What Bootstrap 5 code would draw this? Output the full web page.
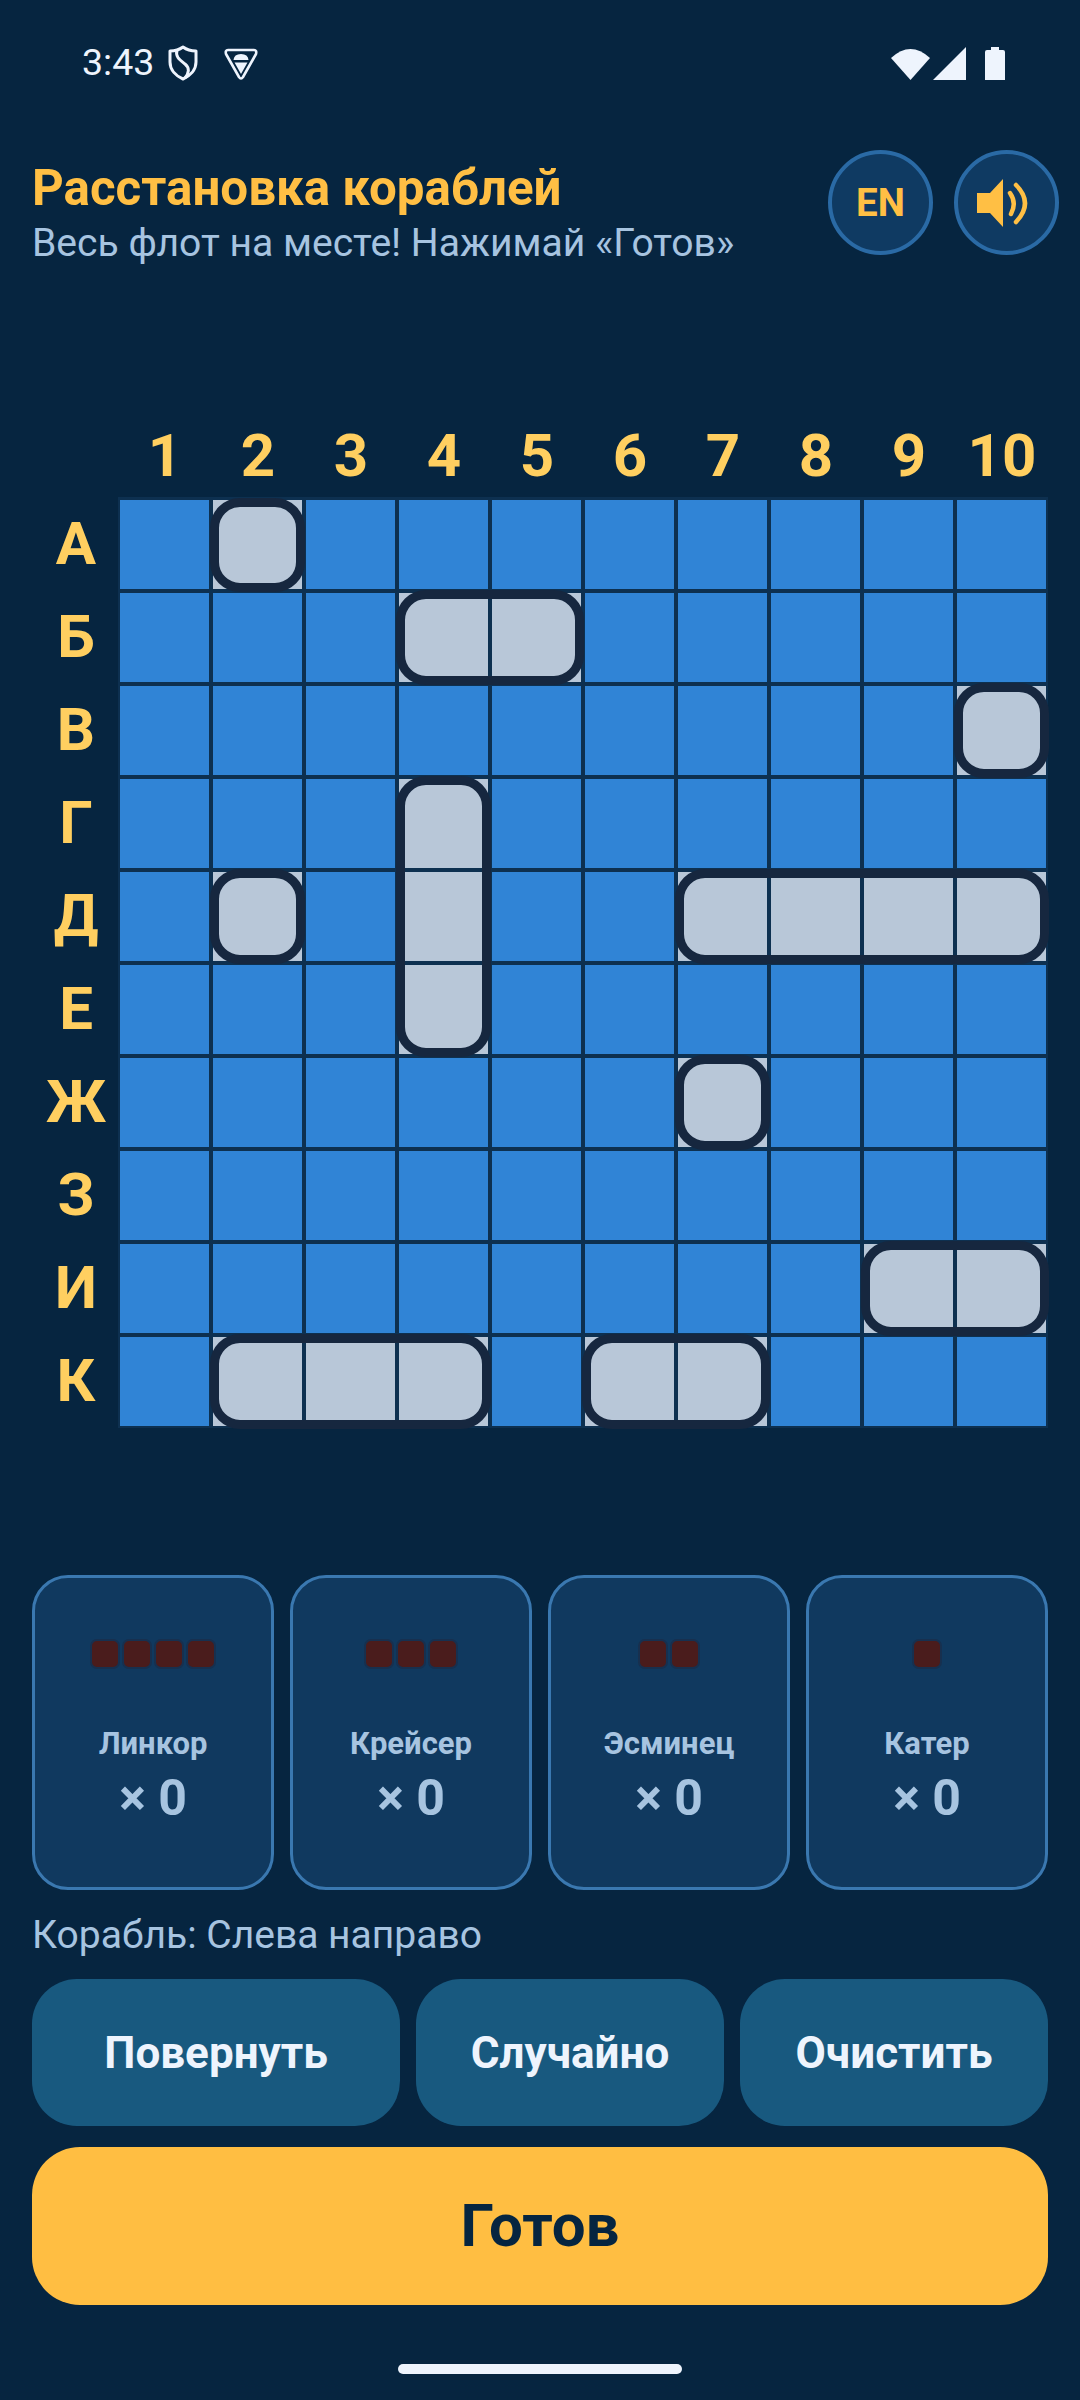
<!DOCTYPE html>
<html lang="ru">
<head>
    <meta charset="UTF-8">
    <meta name="viewport" content="width=device-width, initial-scale=1.0">
    <title>Расстановка кораблей</title>
    <link href="https://cdn.jsdelivr.net/npm/bootstrap@5.3.3/dist/css/bootstrap.min.css" rel="stylesheet">
    <style>
        html, body {
            background: #062540;
            font-family: Roboto, "Liberation Sans", sans-serif;
            color: #a7c4e0;
        }
        body { width: 1080px; height: 2400px; overflow: hidden; }

        /* status bar */
        .status-bar { height: 126px; padding: 0 75px 0 82px; color: #eef4fd; }
        .status-time { font-size: 37.5px; line-height: 1; width: 86px; }

        /* header */
        .top-head { height: 104px; margin-top: 24px; padding: 0 21px 0 32px; }
        .page-title { font-size: 49.3px; line-height: 56px; font-weight: 700; color: #ffbf44; margin: 10px 0 0; }
        .page-sub { font-size: 39.1px; line-height: 42px; margin-top: 6px; }
        .round-btn {
            width: 105px; height: 105px; padding: 0;
            border: 4px solid #2a6aa5; border-radius: 50%;
            background: #0f3a62; color: #ffbf44;
            font-size: 38.500px; font-weight: 700;
        }
        .round-btn:hover { background: #0f3a62; color: #ffbf44; border-color: #2a6aa5; }

        /* board */
        .board-wrap { margin-top: 166px; padding-left: 32px; }
        .col-heads { margin-left: 86.5px; height: 77px; }
        .col-head { width: 93px; padding-top: 3px; text-align: center; font-size: 60px; line-height: 66px; font-weight: 700; color: #ffcf60; }
        .row-heads { width: 86px; padding-left: 2px; }
        .row-head { height: 93px; font-size: 60px; font-weight: 700; color: #ffcf60; }
        .board {
            display: grid;
            grid-template-columns: repeat(10, 89.4px);
            grid-auto-rows: 89.4px;
            gap: 3.6px;
            padding: 3px 2px 2px;
            background: #0d3050;
        }
        .sea { background: #3084d6; }
        .sea.hull { background: #b8c7d8; }
        .ship-frame {
            margin: -2.500px;
            border: 9.500px solid #16273f;
            border-radius: 30px;
            pointer-events: none;
        }

        /* fleet cards */
        .fleet { margin-top: 147px; padding: 0 32px; }
        .fleet-card {
            height: 315px;
            background: #10395f;
            border: 3px solid #3a78b0;
            border-radius: 36px;
            align-items: center;
        }
        .hull-row { margin-top: 61px; height: 30px; gap: 2px; }
        .hull-seg { width: 30px; height: 30px; background: #4a1c1c; border: 2px solid #17304f; border-radius: 7px; }
        .fleet-name { margin-top: 56px; font-size: 31px; line-height: 38px; font-weight: 700; }
        .fleet-count { margin-top: 6px; font-size: 50px; line-height: 58px; font-weight: 700; }

        .orient { margin: 24px 0 0 32px; font-size: 39px; line-height: 42px; }

        /* actions */
        .actions { margin-top: 23px; padding: 0 32px; }
        .act-btn {
            height: 147px; flex: 308 1 0; padding: 0;
            background: #18597f; border: 0; border-radius: 45px;
            color: #eef4fd; font-size: 44px; font-weight: 700;
        }
        .act-btn:hover { background: #18597f; color: #eef4fd; }
        .act-wide { flex-grow: 368; }
        .ready-btn {
            display: block; width: 1016px; height: 158px; margin: 21px 0 0 32px; padding: 0;
            background: #ffbe42; border: 0; border-radius: 48px;
            color: #062540; font-size: 60px; font-weight: 700;
        }
        .ready-btn:hover { background: #ffbe42; color: #062540; }
        .home-pill { width: 284px; height: 10px; margin: 59px auto 0; background: #eef4fd; border-radius: 5px; }
    </style>
</head>
<body>

<!-- Status bar -->
<div class="status-bar d-flex align-items-center">
    <span class="status-time">3:43</span>
    <svg width="30" height="36" viewBox="0 0 30 36" fill="none" stroke="#eef4fd" stroke-width="3" stroke-linejoin="round">
        <path d="M15 2 C19 5 24 6 28 6 V17 C28 25 22 31 15 34 C8 31 2 25 2 17 V6 C6 6 11 5 15 2Z"/>
        <path d="M9 5 C7 12 12 15 17 19 C22 23 21 28 17 33"/>
    </svg>
    <svg width="34" height="33" viewBox="0 0 34 33" fill="none" style="margin-left:26px">
        <path d="M4 3 H30 Q33 3 32 7 L19 30 Q17 33 15 30 L2 7 Q1 3 4 3Z" stroke="#eef4fd" stroke-width="2.6" stroke-linejoin="round"/>
        <path d="M9.5 13 Q10 7 17 7 Q24 7 24.5 13Z" fill="#eef4fd"/>
        <path d="M10.5 15.5 H23.5 L17 27Z" fill="#eef4fd"/>
    </svg>
    <svg class="ms-auto" width="39" height="33" viewBox="0 0 39 33" fill="#eef4fd">
        <path d="M0 11 Q19.500 -7 39 11 L19.500 33Z"/>
    </svg>
    <svg width="33" height="33" viewBox="0 0 33 33" fill="#eef4fd" style="margin-left:3px">
        <path d="M33 0 V33 H0Z"/>
    </svg>
    <svg width="20" height="33" viewBox="0 0 20 33" fill="#eef4fd" style="margin-left:19px">
        <path d="M6 0 H14 V3 H18 Q20 3 20 5 V33 H0 V5 Q0 3 2 3 H6Z"/>
    </svg>
</div>

<!-- Title and round buttons -->
<div class="top-head d-flex align-items-start">
    <div class="flex-grow-1">
        <h1 class="page-title">Расстановка кораблей</h1>
        <div class="page-sub">Весь флот на месте! Нажимай «Готов»</div>
    </div>
    <button type="button" class="btn round-btn">EN</button>
    <button type="button" class="btn round-btn d-flex align-items-center justify-content-center" style="margin-left:21px" aria-label="Звук">
        <svg width="104" height="104" viewBox="0 0 104 104" fill="#ffbf44" class="flex-shrink-0">
            <path d="M22 42 H35 L48 28 V76 L35 62 H22Z"/>
            <path d="M55 42 Q62 52 56 63" fill="none" stroke="#ffbf44" stroke-width="4.500" stroke-linecap="round"/>
            <path d="M61 34 Q79 52 61 71" fill="none" stroke="#ffbf44" stroke-width="4.500" stroke-linecap="round"/>
        </svg>
    </button>
</div>

<!-- Board -->
<div class="board-wrap">
    <div class="col-heads d-flex" id="col-heads"></div>
    <div class="d-flex">
        <div class="row-heads" id="row-heads"></div>
        <div class="board" id="board"></div>
    </div>
</div>

<!-- Fleet -->
<div class="fleet">
    <div class="row g-3" id="fleet"></div>
</div>

<div class="orient">Корабль: Слева направо</div>

<div class="actions d-flex gap-3">
    <button type="button" class="btn act-btn act-wide">Повернуть</button>
    <button type="button" class="btn act-btn">Случайно</button>
    <button type="button" class="btn act-btn">Очистить</button>
</div>
<button type="button" class="btn ready-btn">Готов</button>
<div class="home-pill"></div>

<script>
    const rows = ['А', 'Б', 'В', 'Г', 'Д', 'Е', 'Ж', 'З', 'И', 'К'];

    // row, col (from 1), width, height
    const ships = [
        [1, 2, 1, 1], [2, 4, 2, 1], [3, 10, 1, 1], [4, 4, 1, 3], [5, 2, 1, 1],
        [5, 7, 4, 1], [7, 7, 1, 1], [9, 9, 2, 1], [10, 2, 3, 1], [10, 6, 2, 1]
    ];

    const fleet = [
        { name: 'Линкор', size: 4 },
        { name: 'Крейсер', size: 3 },
        { name: 'Эсминец', size: 2 },
        { name: 'Катер', size: 1 }
    ];

    const colHeads = document.getElementById('col-heads');
    for (let c = 1; c <= 10; c++) {
        colHeads.innerHTML += `<div class="col-head">${c}</div>`;
    }

    const rowHeads = document.getElementById('row-heads');
    rows.forEach((r) => {
        rowHeads.innerHTML += `<div class="row-head d-flex align-items-center justify-content-center">${r}</div>`;
    });

    const board = document.getElementById('board');
    let html = '';
    for (let r = 1; r <= 10; r++) {
        for (let c = 1; c <= 10; c++) {
            const hull = ships.some(([sr, sc, w, h]) => r >= sr && r < sr + h && c >= sc && c < sc + w);
            html += `<div class="sea${hull ? ' hull' : ''}" style="grid-area:${r}/${c}"></div>`;
        }
    }
    ships.forEach(([sr, sc, w, h]) => {
        html += `<div class="ship-frame" style="grid-area:${sr}/${sc}/${sr + h}/${sc + w}"></div>`;
    });
    board.innerHTML = html;

    document.getElementById('fleet').innerHTML = fleet.map((f) => `
        <div class="col-3">
            <div class="card fleet-card">
                <div class="hull-row d-flex">${'<div class="hull-seg"></div>'.repeat(f.size)}</div>
                <div class="fleet-name">${f.name}</div>
                <div class="fleet-count">× 0</div>
            </div>
        </div>`).join('');
</script>
<script src="https://cdn.jsdelivr.net/npm/bootstrap@5.3.3/dist/js/bootstrap.bundle.min.js"></script>
</body>
</html>
